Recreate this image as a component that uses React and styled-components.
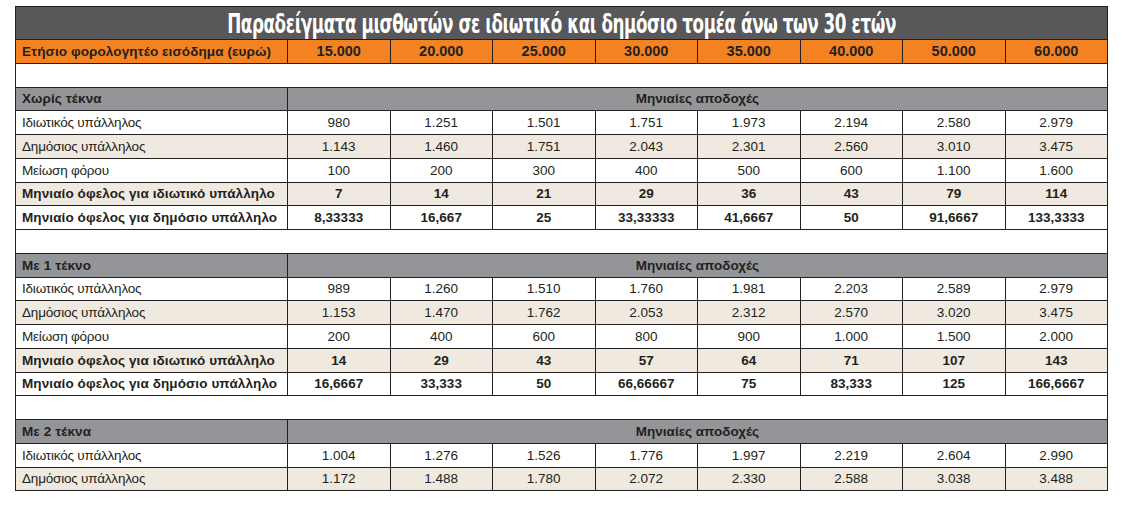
import React from "react";
import styled, { createGlobalStyle } from "styled-components";

const Global = createGlobalStyle`
  html, body { margin: 0; padding: 0; background: #ffffff; }
  body { font-family: "Liberation Sans", Arial, sans-serif; color: #231f20; }
  * { box-sizing: border-box; }
`;

const Page = styled.div`
  padding: 6px 15px 0 15px;
  width: 1123px;
`;

const Table = styled.div`
  width: 1093px;
  border: 1px solid #231f20;
  display: flex;
  flex-direction: column;
`;

const TitleBar = styled.div`
  height: 32px;
  background: #58585a;
  display: flex;
  align-items: center;
  justify-content: center;
  overflow: hidden;
`;

const TitleText = styled.div`
  font-family: "DejaVu Sans Condensed", "DejaVu Sans", sans-serif;
  font-weight: bold;
  font-size: 27px;
  color: #ffffff;
  letter-spacing: -0.6px;
  white-space: nowrap;
  transform: scaleX(0.69);
  line-height: 1;
  padding-top: 1px;
`;

const Row = styled.div`
  display: grid;
  grid-template-columns: 271px repeat(8, 1fr);
  height: 23.75px;
  border-top: 1px solid #231f20;
  background: ${(p) => p.$bg || "#ffffff"};
  font-weight: ${(p) => (p.$bold ? 700 : 400)};
  font-size: 13.5px;
`;

const EmptyRow = styled.div`
  height: 23.75px;
  border-top: 1px solid #231f20;
  background: #ffffff;
`;

const Label = styled.div`
  display: flex;
  align-items: center;
  padding-left: 6px;
  white-space: nowrap;
  letter-spacing: ${(p) => (p.$bold ? "0.1px" : "-0.2px")};
`;

const Cell = styled.div`
  display: flex;
  align-items: center;
  justify-content: center;
  border-left: 1px solid #231f20;
  white-space: nowrap;
  font-size: ${(p) => (p.$big ? "14.5px" : "inherit")};
`;

const Merged = styled.div`
  grid-column: 2 / span 8;
  display: flex;
  align-items: center;
  justify-content: center;
  border-left: 1px solid #231f20;
`;

const incomes = ["15.000", "20.000", "25.000", "30.000", "35.000", "40.000", "50.000", "60.000"];

const sections = [
  {
    title: "Χωρίς τέκνα",
    rows: [
      ["Ιδιωτικός υπάλληλος", ["980", "1.251", "1.501", "1.751", "1.973", "2.194", "2.580", "2.979"]],
      ["Δημόσιος υπάλληλος", ["1.143", "1.460", "1.751", "2.043", "2.301", "2.560", "3.010", "3.475"]],
      ["Μείωση φόρου", ["100", "200", "300", "400", "500", "600", "1.100", "1.600"]],
      ["Μηνιαίο όφελος για ιδιωτικό υπάλληλο", ["7", "14", "21", "29", "36", "43", "79", "114"]],
      ["Μηνιαίο όφελος για δημόσιο υπάλληλο", ["8,33333", "16,667", "25", "33,33333", "41,6667", "50", "91,6667", "133,3333"]],
    ],
  },
  {
    title: "Με 1 τέκνο",
    rows: [
      ["Ιδιωτικός υπάλληλος", ["989", "1.260", "1.510", "1.760", "1.981", "2.203", "2.589", "2.979"]],
      ["Δημόσιος υπάλληλος", ["1.153", "1.470", "1.762", "2.053", "2.312", "2.570", "3.020", "3.475"]],
      ["Μείωση φόρου", ["200", "400", "600", "800", "900", "1.000", "1.500", "2.000"]],
      ["Μηνιαίο όφελος για ιδιωτικό υπάλληλο", ["14", "29", "43", "57", "64", "71", "107", "143"]],
      ["Μηνιαίο όφελος για δημόσιο υπάλληλο", ["16,6667", "33,333", "50", "66,66667", "75", "83,333", "125", "166,6667"]],
    ],
  },
  {
    title: "Με 2 τέκνα",
    rows: [
      ["Ιδιωτικός υπάλληλος", ["1.004", "1.276", "1.526", "1.776", "1.997", "2.219", "2.604", "2.990"]],
      ["Δημόσιος υπάλληλος", ["1.172", "1.488", "1.780", "2.072", "2.330", "2.588", "3.038", "3.488"]],
    ],
  },
];

const BEIGE = "#efe9df";

export default function App() {
  return (
    <Page>
      <Global />
      <Table>
        <TitleBar>
          <TitleText>Παραδείγματα μισθωτών σε ιδιωτικό και δημόσιο τομέα άνω των 30 ετών</TitleText>
        </TitleBar>
        <Row $bg="#f58220" $bold>
          <Label $bold>Ετήσιο φορολογητέο εισόδημα (ευρώ)</Label>
          {incomes.map((v) => (
            <Cell key={v} $big>{v}</Cell>
          ))}
        </Row>
        {sections.map((s) => (
          <React.Fragment key={s.title}>
            <EmptyRow />
            <Row $bg="#939598" $bold>
              <Label $bold>{s.title}</Label>
              <Merged>Μηνιαίες αποδοχές</Merged>
            </Row>
            {s.rows.map(([label, vals], i) => {
              const bold = i >= 3;
              return (
                <Row key={label} $bg={i % 2 === 1 ? BEIGE : "#ffffff"} $bold={bold}>
                  <Label $bold={bold}>{label}</Label>
                  {vals.map((v, j) => (
                    <Cell key={j}>{v}</Cell>
                  ))}
                </Row>
              );
            })}
          </React.Fragment>
        ))}
      </Table>
    </Page>
  );
}
